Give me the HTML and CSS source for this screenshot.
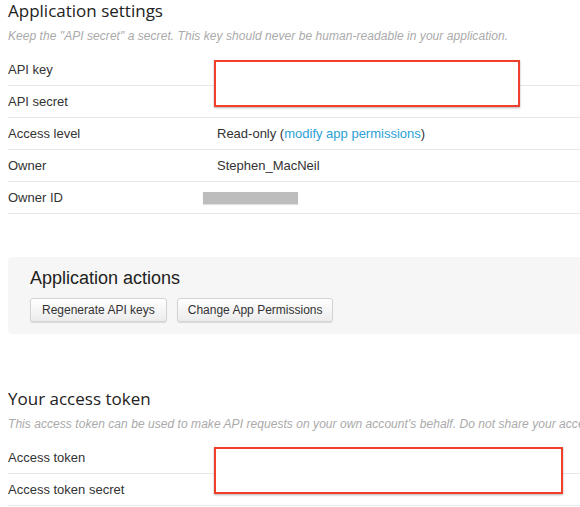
FILE: index.html
```html
<!DOCTYPE html>
<html>
<head>
<meta charset="utf-8">
<link rel="stylesheet" href="styles.css">
</head>
<body>
<div class="page">
  <section class="settings">
    <h2 class="title">Application settings</h2>
    <p class="hint">Keep the "API secret" a secret. This key should never be human-readable in your application.</p>
    <div class="rows">
      <div class="row"><span class="label">API key</span><span class="value"></span></div>
      <div class="row"><span class="label">API secret</span><span class="value"></span></div>
      <div class="row"><span class="label">Access level</span><span class="value">Read-only (<a class="link" href="#">modify app permissions</a>)</span></div>
      <div class="row"><span class="label">Owner</span><span class="value">Stephen_MacNeil</span></div>
      <div class="row"><span class="label">Owner ID</span><span class="value"><span class="redacted"></span></span></div>
      <div class="mask mask-keys"></div>
    </div>
  </section>

  <section class="actions">
    <h3 class="actions-title">Application actions</h3>
    <div class="buttons">
      <button class="btn">Regenerate API keys</button>
      <button class="btn btn-narrow">Change App Permissions</button>
    </div>
  </section>

  <section class="token">
    <h2 class="title">Your access token</h2>
    <p class="hint">This access token can be used to make API requests on your own account's behalf. Do not share your access token secret with anyone.</p>
    <div class="rows">
      <div class="row"><span class="label">Access token</span><span class="value"></span></div>
      <div class="row"><span class="label">Access token secret</span><span class="value"></span></div>
      <div class="mask mask-token"></div>
    </div>
  </section>
</div>
</body>
</html>
```

FILE: styles.css
```css
html, body {
  margin: 0;
  padding: 0;
  background: #fff;
  overflow: hidden;
}
body {
  font-family: "Liberation Sans", Arial, sans-serif;
  color: #333;
  font-size: 13px;
}
.page {
  width: 820px;
  padding: 0 0 0 8px;
}
.title {
  margin: 0;
  font-family: "Open Sans", Lato, sans-serif;
  font-weight: 400;
  font-size: 17px;
  line-height: 22px;
  color: #222;
}
.hint {
  margin: 6px 0 0;
  height: 26px;
  line-height: 16px;
  font-size: 12px;
  letter-spacing: 0.05px;
  font-style: italic;
  color: #aaa;
  white-space: nowrap;
}
.rows {
  position: relative;
}
.row {
  display: flex;
  align-items: center;
  height: 31px;
  border-bottom: 1px solid #e8e8e8;
}
.label {
  width: 209px;
  flex: none;
}
.value {
  display: flex;
  align-items: center;
}
.link {
  color: #2a9fd6;
  text-decoration: none;
}
.redacted {
  display: block;
  width: 95px;
  height: 12px;
  margin-left: -14px;
  background: #bdbdbd;
  box-shadow: 0 1px 1px rgba(0,0,0,0.12);
}
.mask {
  position: absolute;
  left: 206px;
  top: 6px;
  height: 43px;
  background: #fff;
  border: 2px solid #f0402c;
  box-shadow: 0 1px 2px rgba(0,0,0,0.3);
}
.mask-keys { width: 302px; }
.mask-token { width: 345px; top: 5px; }

.actions {
  margin-top: 43px;
  height: 77px;
  box-sizing: border-box;
  background: #f6f6f6;
  border-radius: 4px;
  padding: 10px 22px 0;
}
.actions-title {
  margin: 0;
  font-weight: 400;
  font-size: 18px;
  line-height: 22px;
  color: #222;
}
.buttons {
  display: flex;
  gap: 10px;
  margin-top: 9px;
}
.btn {
  font-family: "Liberation Sans", Arial, sans-serif;
  font-size: 12px;
  color: #333;
  height: 24px;
  padding: 0 11px;
  border: 1px solid #d4d4d4;
  border-radius: 3px;
  background: linear-gradient(#fff, #ececec);
  box-shadow: 0 1px 1px rgba(0,0,0,0.12);
}
.btn-narrow {
  padding: 0 10px;
}
.token {
  margin-top: 54px;
}
```
